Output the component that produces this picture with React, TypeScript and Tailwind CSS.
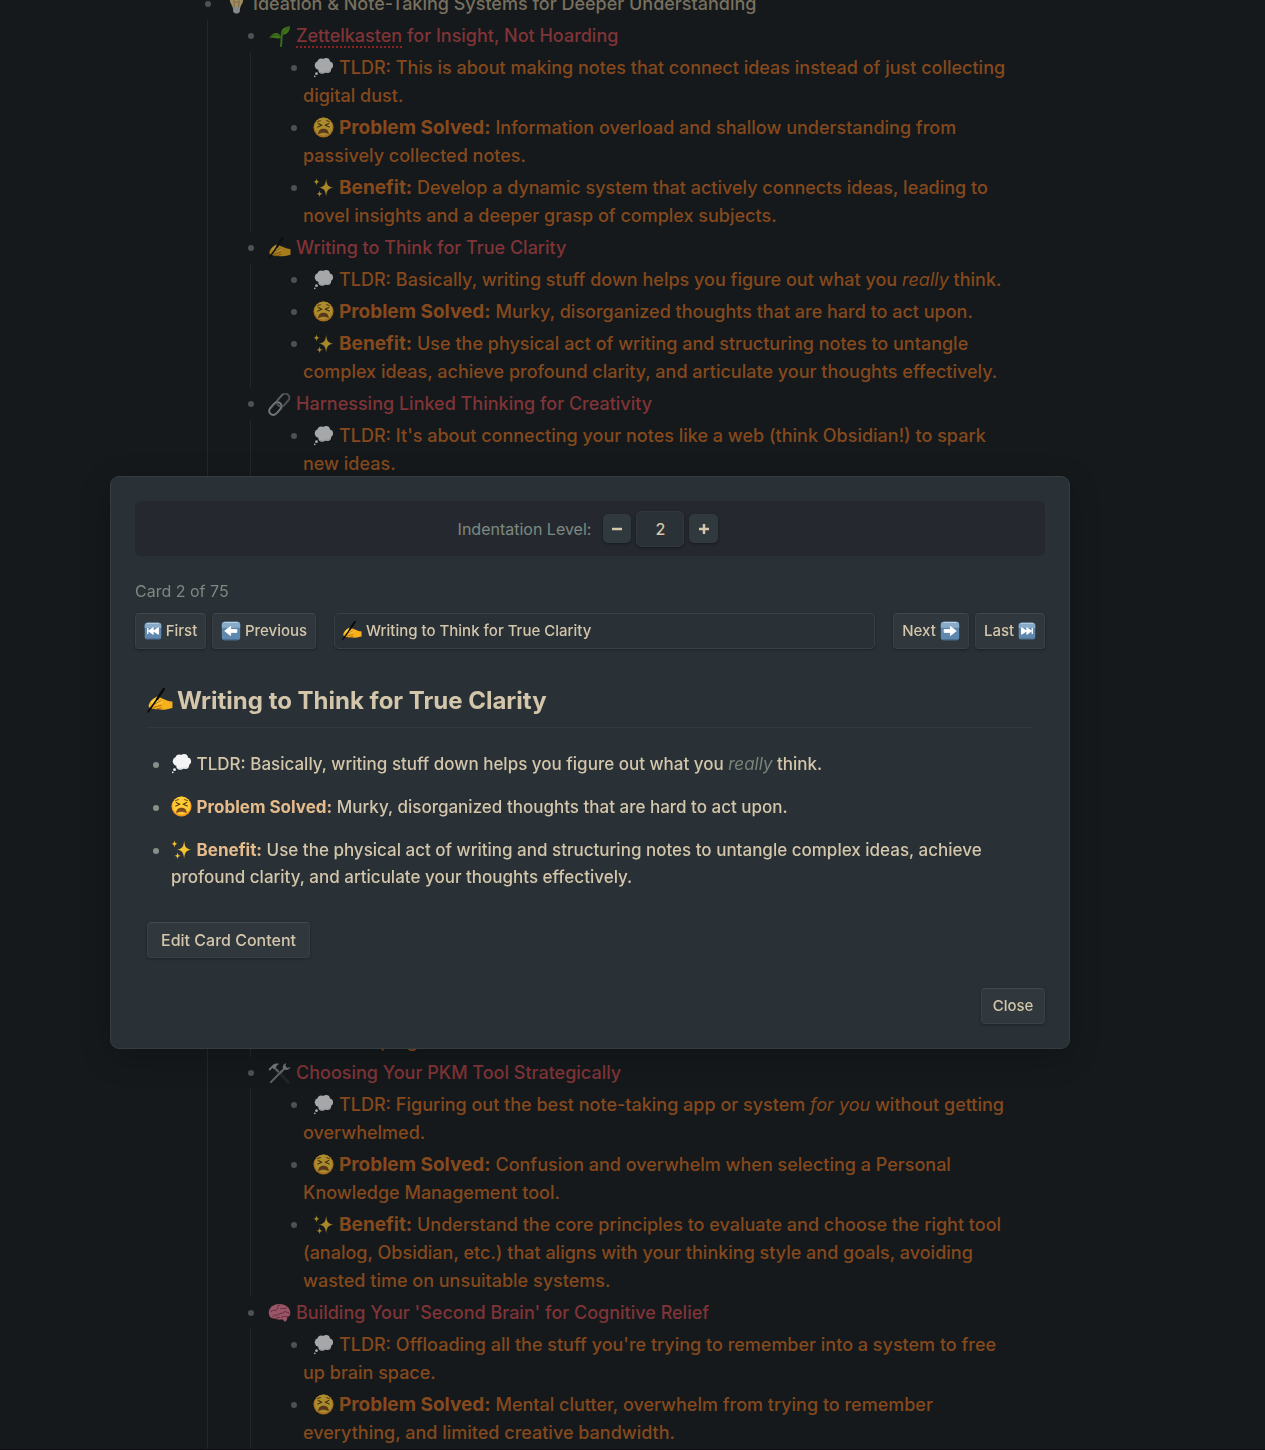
import React, { useState } from 'react';

type EmojiName =
  | 'bulb' | 'seedling' | 'thought' | 'tired' | 'sparkles' | 'writing'
  | 'link' | 'tools' | 'brain' | 'first' | 'previous' | 'next' | 'last';

const tile = (
  <>
    <rect x="1" y="1" width="22" height="22" rx="3.5" fill="#5f88ae" />
    <path d="M1 8V4.5A3.5 3.5 0 0 1 4.500 1h15A3.5 3.5 0 0 1 23 4.500V8z" fill="#88abc9" />
    <path d="M4 1.800h16" stroke="#b9d2e4" strokeWidth="1.200" />
    <path d="M3 22.400h18" stroke="#486b8f" strokeWidth="1.200" />
  </>
);

const drawings: Record<EmojiName, React.ReactNode> = {
  bulb: (
    <>
      <path d="M12 0a7 7 0 0 0-7 7c0 4 3 6 3.500 10h7C16 13 19 11 19 7a7 7 0 0 0-7-7z" fill="#e6c987" />
      <path d="M10 15 9 8l3 2 3-2-1 7" fill="none" stroke="#b8975a" strokeWidth="1" />
      <path d="M8.500 14.500h7v5l-2 2h-3l-2-2z" fill="#c4c4c6" />
    </>
  ),
  seedling: (
    <>
      <path d="M13.500 22c.8-5 .4-8.500 1-13" fill="none" stroke="#4f9a1b" strokeWidth="2" strokeLinecap="round" />
      <path d="M14 13C12 7 6 6 1 14c5-2 8 2 13-1z" fill="#5aa51e" />
      <path d="M14 10C13 4 17 2 23 1c0 6-4 10-9 9z" fill="#56a41c" />
      <path d="M2 13.500c4-4 8-4 11.500-1M14.500 9.500C17 7 19 4 22.500 1.500" fill="none" stroke="#2f6d0d" strokeWidth=".9" />
    </>
  ),
  thought: (
    <>
      <g fill="#f4f4f6">
        <circle cx="7" cy="9.500" r="5" />
        <circle cx="9.500" cy="6" r="4.300" />
        <circle cx="15" cy="5.600" r="4.400" />
        <circle cx="18.500" cy="9.500" r="4.400" />
        <circle cx="16.500" cy="14" r="4.200" />
        <circle cx="10.500" cy="14.500" r="4.500" />
        <circle cx="12" cy="10" r="6" />
        <circle cx="4" cy="19" r="1.600" />
        <circle cx="2" cy="22" r="1" />
      </g>
      <path d="M8 17.500c2 1 4 .5 5-.5 2 1 5 .5 6-1.500" fill="none" stroke="#d0d0d6" strokeWidth=".9" />
    </>
  ),
  tired: (
    <>
      <circle cx="12" cy="12" r="11.500" fill="#f39a1e" />
      <circle cx="12" cy="11" r="10.300" fill="#fbcb38" />
      <path d="M6 7.500 10 9.500l-4.500 2M18 7.500l-4 2 4.500 2" fill="none" stroke="#5f3a0b" strokeWidth="1.400" strokeLinecap="round" strokeLinejoin="round" />
      <path d="M5 5.500 8.500 4M19 5.500 15.500 4" stroke="#8a5a14" strokeWidth="1.200" strokeLinecap="round" />
      <path d="M6 19.500c0-4 2.500-6 6-6s6 2 6 6c-3.500-1.500-8.500-1.500-12 0z" fill="#7b4a1c" />
      <path d="M8.500 18.300c2-1.400 5-1.400 7 0-2-.4-5-.4-7 0z" fill="#c96a3c" />
    </>
  ),
  sparkles: (
    <g fill="#f4c430">
      <path d="M15 2c.6 6.500 2 9.500 8.500 10.300C17 13 15.600 16 15 22.500 14.400 16 13 13 6.500 12.300 13 11.500 14.400 8.500 15 2z" />
      <path d="M4 1c.3 3 1 4 3.500 4.500C5 6 4.300 7 4 10 3.700 7 3 6 .5 5.500 3 5 3.700 4 4 1z" />
      <path d="M7.500 15c.3 3 1 3.700 3.500 4.200-2.500.5-3.200 1.300-3.500 4-.3-2.700-1-3.500-3.500-4 2.500-.5 3.200-1.200 3.500-4.200z" />
    </g>
  ),
  writing: (
    <>
      <path d="M1.500 16.500c0-3 4-7 7-8.300 1.500-.7 3 .3 4 .8l6 2.500c2 .8 3.500 1 5 1v6c-3 .5-5 1.500-8 1.500-5 0-8-.3-9.500-.8-2-.4-4.500-.7-4.500-2.700z" fill="#f6b11d" />
      <path d="M3 13.500c2-3 5-5 6.500-4.500 1 .5-1 2.500-2 4l6-1.500c2 1.500 0 2.500-4 3.700" fill="#fdd147" />
      <path d="M5.500 15.500 13 12M6 18l7-2M8 19.600l5.500-1.300" fill="none" stroke="#b06f0a" strokeWidth=".9" strokeLinecap="round" />
      <path d="M1 22 5 16.500 15.500 1" fill="none" stroke="#0b0b0c" strokeWidth="1.600" strokeLinecap="round" />
      <path d="m9.500 10 6-9" stroke="#0b0b0c" strokeWidth="2.200" strokeLinecap="round" />
    </>
  ),
  link: (
    <g fill="none" strokeLinecap="round" transform="rotate(-48 12 12)">
      <rect x="-1.500" y="7.500" width="15" height="8.500" rx="4.250" stroke="#84888d" strokeWidth="2.200" />
      <rect x="10.500" y="7.500" width="15" height="8.500" rx="4.250" stroke="#6a6e74" strokeWidth="2.200" />
      <rect x="-1.500" y="7" width="15" height="8.500" rx="4.250" stroke="#c5c8cc" strokeWidth=".8" />
      <path d="M11 7.200h11" stroke="#a5a8ac" strokeWidth=".8" />
    </g>
  ),
  tools: (
    <>
      <path d="M6 5 21 21" stroke="#2b2c30" strokeWidth="3" strokeLinecap="round" />
      <path d="m5 4 6 6.500" stroke="#85898e" strokeWidth="2.200" />
      <path d="m14 10-11 11" stroke="#84898f" strokeWidth="2.200" strokeLinecap="round" />
      <path d="m12.500 11.500 5-5" stroke="#8b9197" strokeWidth="2.200" />
      <path d="M19 1c-3 1-4 3-3.500 5.500 2 2.500 6 2.500 8-1l-3.500.5-1.700-1.800z" fill="#9aa0a6" />
      <path d="M.5 7.500 5 3c2-1.500 5-1.700 7-1-2 .6-3 1.500-3.300 3L6 7.500 4.500 6 2 9z" fill="#a5abb0" />
    </>
  ),
  brain: (
    <>
      <path d="M.8 12C.5 6 5 2.500 11 2c7-.4 12 3.500 12.300 9 .2 3-1.600 4.500-3.300 5 .5 2.500-.5 4-2.500 4.500l-2.500-2.500c-3 .8-6 .5-7.500-.8C3.500 17.500 1 15.500.8 12z" fill="#e0788f" />
      <path d="M3 10c2-3 4 0 6-2s0-4 3-5M5 15c2-3 4 0 6-2s5 0 6-3M13 7c2-1 4 1 6-1M14 16c2-2 4 0 6-1M18 10c1 1 3 0 4 2M8 17c1-1 3-1 4-1" fill="none" stroke="#a3445e" strokeWidth="1.200" strokeLinecap="round" />
    </>
  ),
  first: (
    <>
      {tile}
      <path d="M5 8v8M12 8l-5.500 4 5.500 4zM19 8l-6 4 6 4z" fill="#fff" stroke="#fff" strokeWidth="1.800" strokeLinejoin="round" />
    </>
  ),
  last: (
    <>
      {tile}
      <path d="M19 8v8M12 8l5.500 4-5.500 4zM5 8l6 4-6 4z" fill="#fff" stroke="#fff" strokeWidth="1.800" strokeLinejoin="round" />
    </>
  ),
  previous: (
    <>
      {tile}
      <path d="m4.500 12 7-5.500v3.800H19v3.400h-7.500v3.800z" fill="#fff" stroke="#fff" strokeLinejoin="round" />
    </>
  ),
  next: (
    <>
      {tile}
      <path d="m19.500 12-7-5.500v3.800H5v3.400h7.500v3.800z" fill="#fff" stroke="#fff" strokeLinejoin="round" />
    </>
  ),
};

function Emoji({ name, className }: { name: EmojiName; className: string }) {
  return (
    <svg viewBox="0 0 24 24" aria-hidden="true" className={`inline-block shrink-0 ${className}`}>
      {drawings[name]}
    </svg>
  );
}

type Note = { emoji?: EmojiName; label?: string; body: React.ReactNode; className?: string };
type Topic = { emoji: EmojiName; title: React.ReactNode; notes: Note[] };

const topics: Topic[] = [
  {
    emoji: 'seedling',
    title: (
      <>
        <span className="underline decoration-[#8c2222] decoration-dotted decoration-2 underline-offset-4">Zettelkasten</span> for
        Insight, Not Hoarding
      </>
    ),
    notes: [
      { emoji: 'thought', body: 'TLDR: This is about making notes that connect ideas instead of just collecting digital dust.' },
      { emoji: 'tired', label: 'Problem Solved:', body: 'Information overload and shallow understanding from passively collected notes.' },
      { emoji: 'sparkles', label: 'Benefit:', body: 'Develop a dynamic system that actively connects ideas, leading to novel insights and a deeper grasp of complex subjects.' },
    ],
  },
  {
    emoji: 'writing',
    title: 'Writing to Think for True Clarity',
    notes: [
      { emoji: 'thought', body: <>TLDR: Basically, writing stuff down helps you figure out what you <em>really</em> think.</> },
      { emoji: 'tired', label: 'Problem Solved:', body: 'Murky, disorganized thoughts that are hard to act upon.' },
      { emoji: 'sparkles', label: 'Benefit:', body: 'Use the physical act of writing and structuring notes to untangle complex ideas, achieve profound clarity, and articulate your thoughts effectively.' },
    ],
  },
  {
    emoji: 'link',
    title: 'Harnessing Linked Thinking for Creativity',
    notes: [
      { emoji: 'thought', body: "TLDR: It's about connecting your notes like a web (think Obsidian!) to spark new ideas." },
      { body: 'note-keeping.', className: 'mt-[545px]' },
    ],
  },
  {
    emoji: 'tools',
    title: 'Choosing Your PKM Tool Strategically',
    notes: [
      { emoji: 'thought', body: <>TLDR: Figuring out the best note-taking app or system <em>for you</em> without getting overwhelmed.</> },
      { emoji: 'tired', label: 'Problem Solved:', body: 'Confusion and overwhelm when selecting a Personal Knowledge Management tool.' },
      { emoji: 'sparkles', label: 'Benefit:', body: 'Understand the core principles to evaluate and choose the right tool (analog, Obsidian, etc.) that aligns with your thinking style and goals, avoiding wasted time on unsuitable systems.' },
    ],
  },
  {
    emoji: 'brain',
    title: "Building Your 'Second Brain' for Cognitive Relief",
    notes: [
      { emoji: 'thought', body: "TLDR: Offloading all the stuff you're trying to remember into a system to free up brain space." },
      { emoji: 'tired', label: 'Problem Solved:', body: 'Mental clutter, overwhelm from trying to remember everything, and limited creative bandwidth.' },
    ],
  },
];

function Bullet() {
  return <span className="mt-[11px] size-[6px] shrink-0 rounded-full bg-[#4b5350]" />;
}

function Outline() {
  return (
    <ul className="-mt-3 text-[18px] leading-7 font-[450]">
      <li>
        <div className="ml-[5px] flex gap-[14px] py-[2px] text-[#78705f]">
          <Bullet />
          <span className="flex items-center gap-[5px]">
            <Emoji name="bulb" className="size-[23px] opacity-65" />
            <span>Ideation &amp; Note-Taking Systems for Deeper Understanding</span>
          </span>
        </div>
        <ul className="ml-[7px] border-l border-[#22282a]">
          {topics.map((topic, i) => (
            <li key={i}>
              <div className="ml-10 flex gap-[14px] py-[2px] text-[#803437]">
                <Bullet />
                <span className="flex items-center gap-[5px]">
                  <Emoji name={topic.emoji} className="size-[23px] opacity-65" />
                  <span>{topic.title}</span>
                </span>
              </div>
              <ul className="ml-[42px] border-l border-[#22282a]">
                {topic.notes.map((note, j) => (
                  <li key={j} className={`ml-10 flex gap-[6px] py-[2px] text-[#86491d] ${note.className ?? ''}`}>
                    <Bullet />
                    <p className={note.emoji ? 'indent-[10px]' : ''}>
                      {note.emoji && <Emoji name={note.emoji} className="-mt-1 mr-[5px] size-[21px] opacity-65" />}
                      {note.label && <><strong className="text-[19px] font-bold">{note.label}</strong>{' '}</>}
                      {note.body}
                    </p>
                  </li>
                ))}
              </ul>
            </li>
          ))}
        </ul>
      </li>
    </ul>
  );
}

const buttonLook =
  'flex h-9 items-center justify-center gap-1 rounded-[4px] border border-[#394145] border-t-[#424a4d] bg-[#30383d] font-medium text-[#d3c6aa] shadow-[0_1px_3px_rgba(0,0,0,0.35)]';

const stepLook =
  'flex h-[29px] items-center justify-center rounded-[5px] bg-[#30393e] shadow-[0_1px_3px_rgba(0,0,0,0.4)]';

function CardDialog() {
  const [level, setLevel] = useState('2');
  const step = (n: number) => setLevel(String(Math.max(1, Number(level) + n)));

  return (
    <section
      role="dialog"
      aria-label="Card viewer"
      className="w-full max-w-[960px] rounded-[9px] border border-[#343d40] bg-[#2a3136] p-6 text-[#d3c6aa] shadow-[0_8px_32px_rgba(0,0,0,0.2)]"
    >
      <div className="flex h-[55px] items-center justify-center rounded-[6px] bg-[#25292f] pr-1">
        <label htmlFor="level" className="mr-3 text-base text-[#7d8980]">Indentation Level:</label>
        <div className="flex items-center gap-[5px]">
          <button type="button" aria-label="Decrease level" onClick={() => step(-1)} className={`${stepLook} w-7`}>
            <svg viewBox="0 0 10 10" className="size-[10px]"><path d="M0 5h10" stroke="currentColor" strokeWidth="2.500" /></svg>
          </button>
          <input id="level" value={level} onChange={(e) => setLevel(e.target.value)} className="h-9 w-12 rounded-[5px] border border-[#30383c] bg-[#2a3137] text-center text-base font-medium shadow-[0_1px_3px_rgba(0,0,0,0.4)] outline-none" />
          <button type="button" aria-label="Increase level" onClick={() => step(1)} className={`${stepLook} w-[29px]`}>
            <svg viewBox="0 0 10 10" className="size-[10px]"><path d="M0 5h10M5 0v10" stroke="currentColor" strokeWidth="2.500" /></svg>
          </button>
        </div>
      </div>

      <p className="mt-[23px] text-base leading-6 text-[#7d8980]">Card 2 of 75</p>

      <nav aria-label="Cards" className="mt-[10px] flex gap-[18px] text-[15px]">
        <div className="flex gap-[6px]">
          <button type="button" className={`${buttonLook} w-[71px]`}>
            <Emoji name="first" className="size-[18px]" />First
          </button>
          <button type="button" className={`${buttonLook} w-[104px]`}>
            <Emoji name="previous" className="size-5" />Previous
          </button>
        </div>
        <div className="flex h-9 min-w-0 flex-1 items-center gap-1 rounded-[5px] border border-[#394144] bg-[#2a3136] px-[7px] shadow-[0_1px_2px_rgba(0,0,0,0.3)]">
          <Emoji name="writing" className="size-5" />
          <select aria-label="Card" className="min-w-0 flex-1 appearance-none bg-transparent text-[15px] font-medium outline-none">
            <option>Writing to Think for True Clarity</option>
          </select>
        </div>
        <div className="flex gap-[6px]">
          <button type="button" className={`${buttonLook} w-[76px]`}>
            Next<Emoji name="next" className="size-5" />
          </button>
          <button type="button" className={`${buttonLook} w-[70px]`}>
            Last<Emoji name="last" className="size-[18px]" />
          </button>
        </div>
      </nav>

      <article className="mt-6 p-3">
        <h2 className="flex items-center gap-1 border-b border-[#313940] pb-[10px] text-2xl leading-8 font-bold">
          <Emoji name="writing" className="size-[26px]" />
          <span>Writing to Think for True Clarity</span>
        </h2>
        <ul className="mt-[23px] flex flex-col gap-4 text-[17px] leading-[27px] font-[450]">
          <li className="ml-[6px] flex gap-3">
            <span className="mt-[11px] size-[6px] shrink-0 rounded-full bg-[#859289]" />
            <p><Emoji name="thought" className="-mt-1 size-[21px]" /> TLDR: Basically, writing stuff down helps you figure out what you <em className="text-[#7a8478]">really</em> think.</p>
          </li>
          <li className="ml-[6px] flex gap-3">
            <span className="mt-[11px] size-[6px] shrink-0 rounded-full bg-[#859289]" />
            <p><Emoji name="tired" className="-mt-1 size-[21px]" /> <strong className="font-bold text-[#e6bb8b]">Problem Solved:</strong> Murky, disorganized thoughts that are hard to act upon.</p>
          </li>
          <li className="ml-[6px] flex gap-3">
            <span className="mt-[11px] size-[6px] shrink-0 rounded-full bg-[#859289]" />
            <p><Emoji name="sparkles" className="-mt-1 size-[21px]" /> <strong className="font-bold text-[#e6bb8b]">Benefit:</strong> Use the physical act of writing and structuring notes to untangle complex ideas, achieve profound clarity, and articulate your thoughts effectively.</p>
          </li>
        </ul>
        <button type="button" className={`${buttonLook} mt-[31px] w-[163px] text-base`}>Edit Card Content</button>
      </article>

      <div className="mt-[18px] flex justify-end">
        <button type="button" className={`${buttonLook} w-16 text-[15px]`}>Close</button>
      </div>
    </section>
  );
}

export default function App() {
  return (
    <div className="h-screen overflow-hidden border-b border-[#0c0d12] bg-[#15191b] font-['Inter',sans-serif]">
      <main className="pr-[55px]">
        <div className="mx-auto max-w-[810px]">
          <Outline />
        </div>
      </main>
      <div className="fixed inset-0 flex items-center justify-center pt-[75px] pr-[85px]">
        <CardDialog />
      </div>
    </div>
  );
}
